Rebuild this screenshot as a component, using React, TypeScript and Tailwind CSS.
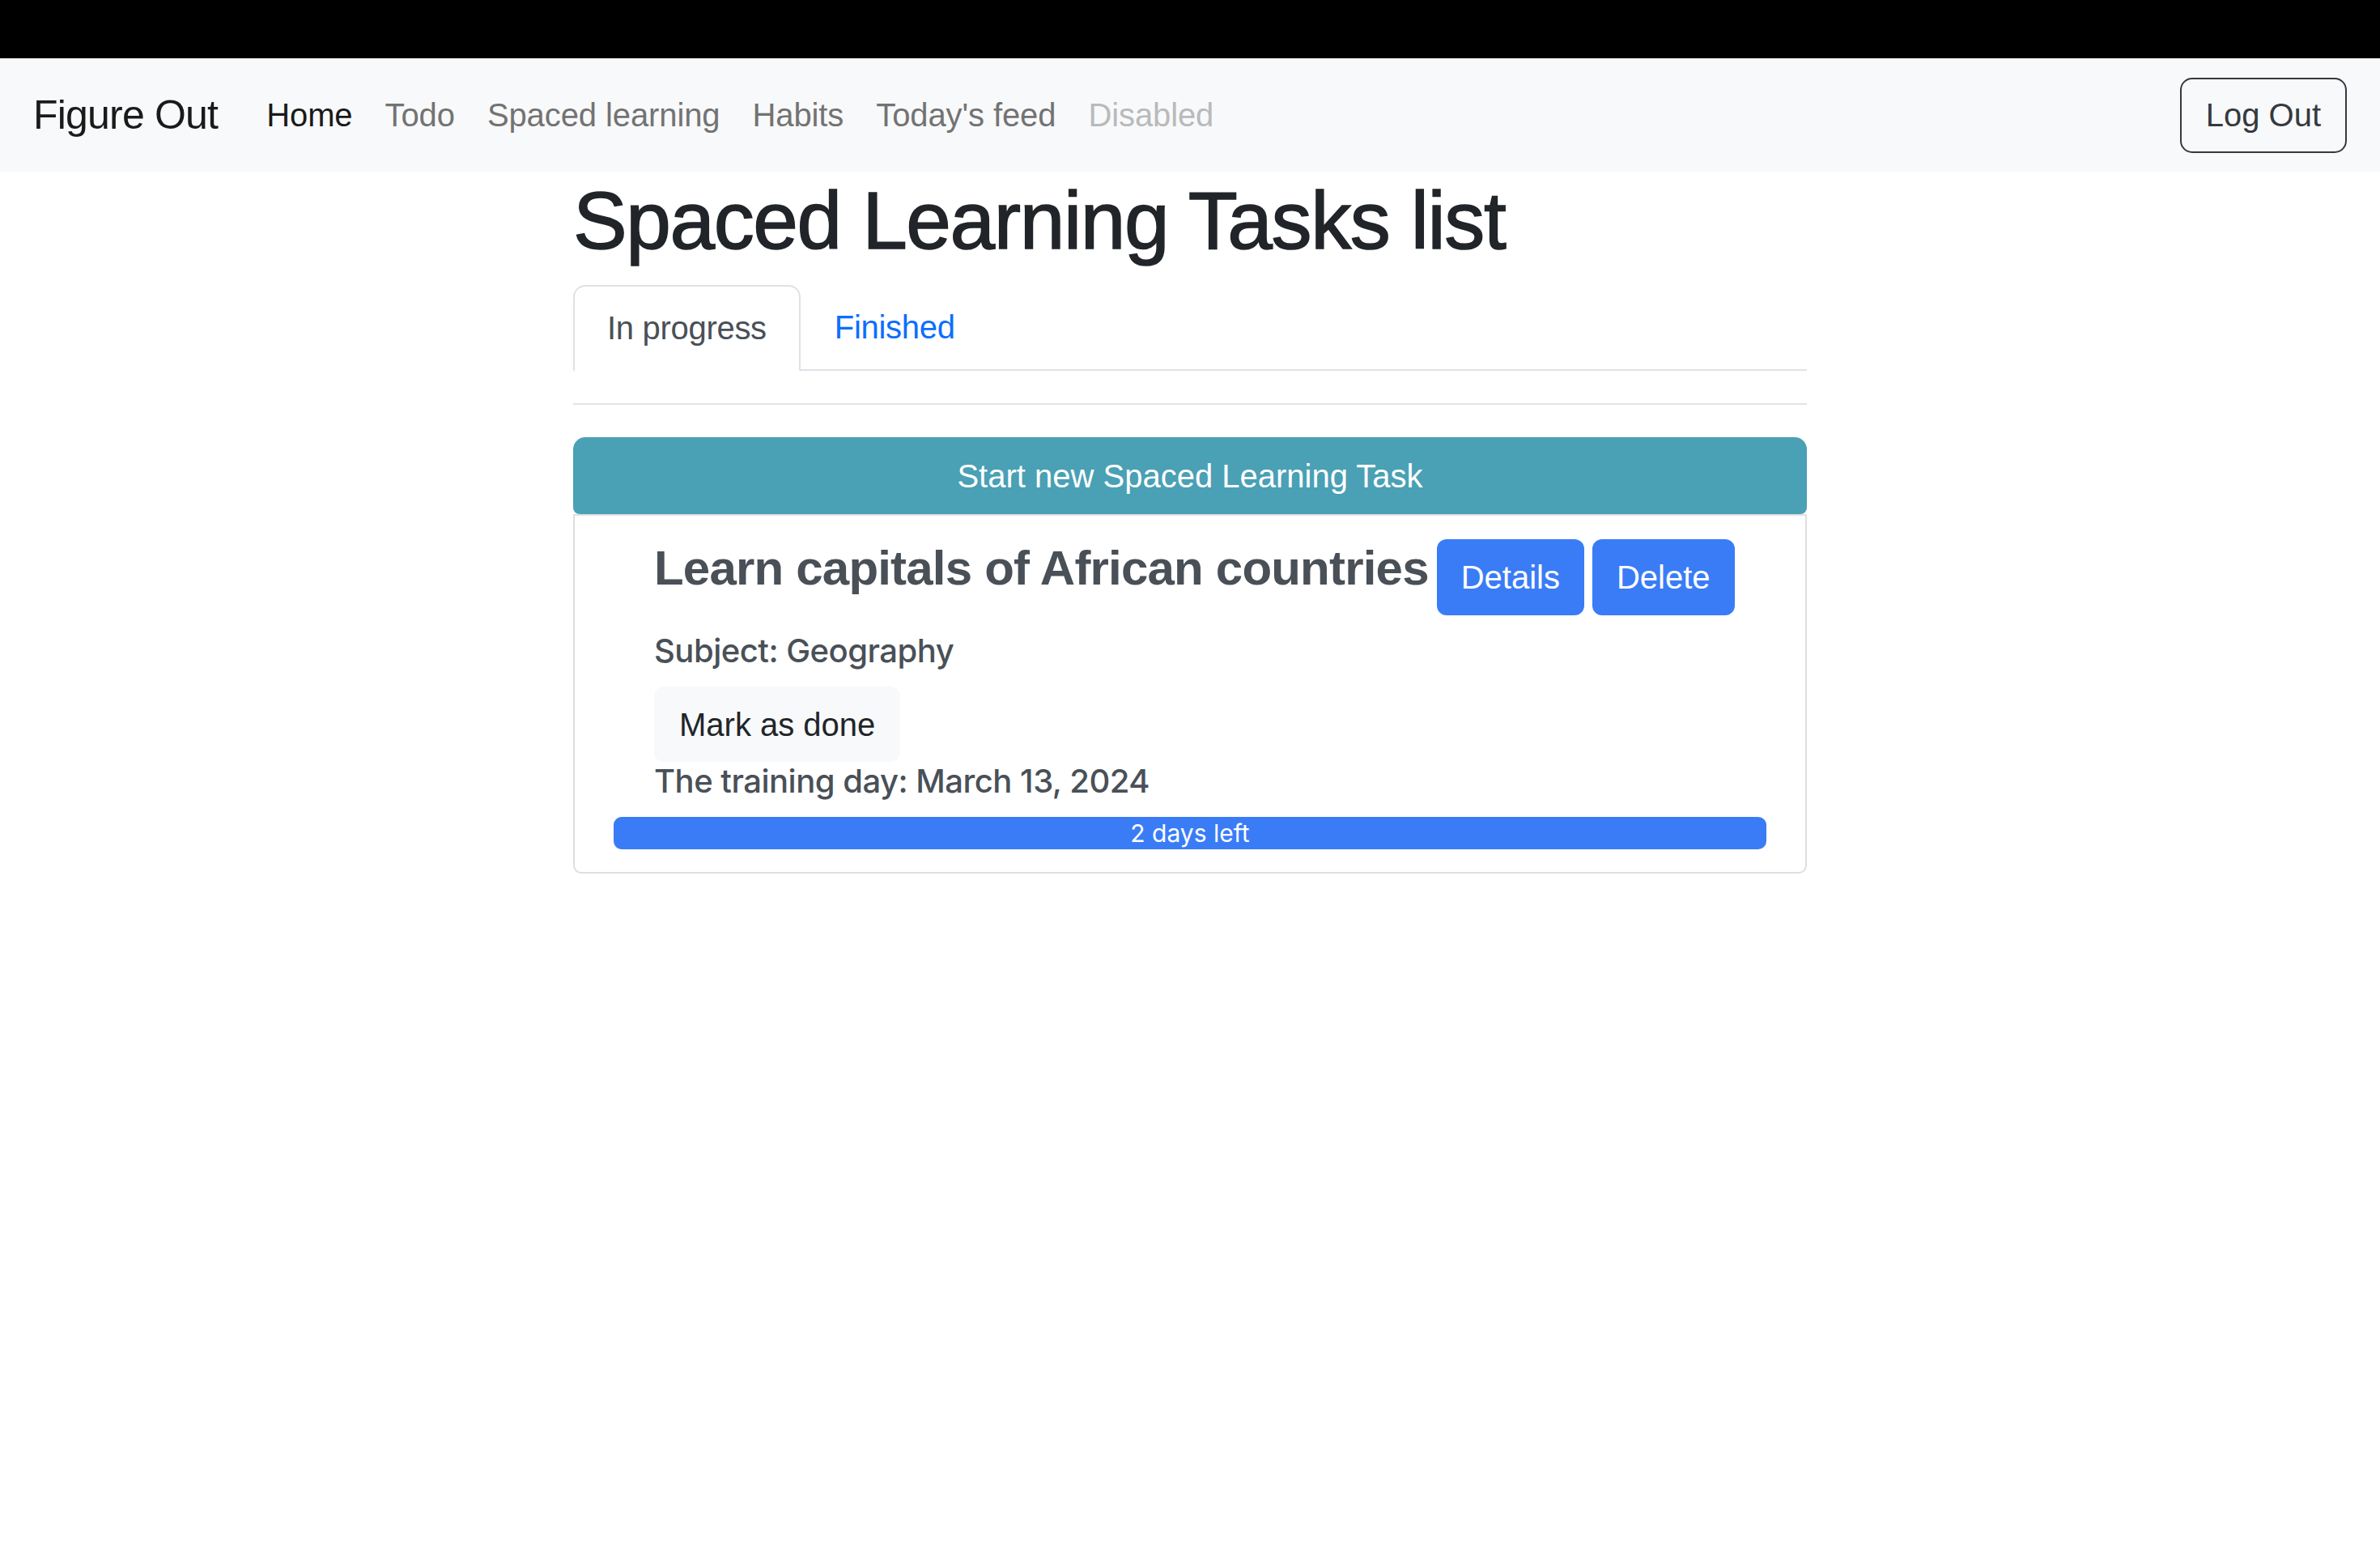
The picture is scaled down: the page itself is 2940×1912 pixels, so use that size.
import React from "react";

const navLinks = [
  { label: "Home", cls: "text-[#1a1a1a]" },
  { label: "Todo", cls: "text-[#737373]" },
  { label: "Spaced learning", cls: "text-[#737373]" },
  { label: "Habits", cls: "text-[#737373]" },
  { label: "Today's feed", cls: "text-[#737373]" },
  { label: "Disabled", cls: "text-[#b9babb]" },
];

const Navbar = () => (
  <nav className="flex h-[140px] items-center bg-[#f8f9fa] pl-[41px] pr-[41px]">
    <a className="mr-[40px] text-[50px] leading-[60px] tracking-[-0.8px] text-[#1a1a1a]">Figure Out</a>
    <ul className="flex items-center">
      {navLinks.map((l) => (
        <li key={l.label}>
          <a className={`block px-[20px] text-[40px] leading-[60px] tracking-[-0.1px] ${l.cls}`}>{l.label}</a>
        </li>
      ))}
    </ul>
    <button className="ml-auto h-[93px] rounded-[15px] border-[2.5px] border-[#343a40] px-[30px] text-[40px] text-[#343a40]">
      Log Out
    </button>
  </nav>
);

const TaskCard = () => (
  <div className="rounded-b-[10px] border-[2.5px] border-[#dfdfdf] px-[48px] pb-[28px] pt-[29px]">
    <div className="pl-[50px] pr-[34px] text-[#495057]">
      <div className="mb-[20px] flex items-start">
        <h4 className="whitespace-nowrap text-[60px] font-bold leading-[72px] tracking-[-0.8px]">Learn capitals of African countries</h4>
        <button className="ml-[10px] h-[94px] rounded-[12px] bg-[#3a7cf6] px-[30px] text-[40px] text-white">Details</button>
        <button className="ml-[10px] h-[94px] rounded-[12px] bg-[#3a7cf6] px-[30px] text-[40px] text-white">Delete</button>
      </div>
      <h6 className="mb-[20px] font-['Inter',sans-serif] text-[40px] font-medium leading-[48px] tracking-[-0.5px]">Subject: Geography</h6>
      <button className="h-[93px] rounded-[12px] bg-[#f8f9fa] px-[31px] text-[40px] text-[#212529]">Mark as done</button>
      <h6 className="mb-[20px] font-['Inter',sans-serif] text-[40px] font-medium leading-[48px] tracking-[-0.5px]">The training day: March 13, 2024</h6>
    </div>
    <div className="flex h-[40px] items-center justify-center rounded-[10px] bg-[#3a7cf6] font-['Inter',sans-serif] text-[30px] text-white">
      2 days left
    </div>
  </div>
);

export default function App() {
  return (
    <div className="min-h-screen bg-white font-['Liberation_Sans','Inter',sans-serif]">
      <div className="h-[72px] bg-black" />
      <Navbar />
      <main className="mx-auto w-[1524px]">
        <h1 className="mb-[20px] text-[100px] leading-[120px] tracking-[-1.4px] text-[#212529] [-webkit-text-stroke:1.5px_#212529]">
          Spaced Learning Tasks list
        </h1>
        <div className="flex border-b-[2.5px] border-[#dee2e6]">
          <button className="-mb-[2.5px] rounded-t-[15px] border-[2.5px] border-[#dee2e6] border-b-white bg-white px-[40px] py-[20px] text-[40px] leading-[60px] tracking-[-0.3px] text-[#495057]">
            In progress
          </button>
          <button className="border-[2.5px] border-transparent px-[40px] py-[20px] text-[40px] leading-[60px] tracking-[-0.3px] text-[#0d6efd]">
            Finished
          </button>
        </div>
        <hr className="my-[40px] border-t-[2.5px] border-[#e3e4e5]" />
        <button className="h-[95px] w-full rounded-t-[15px] rounded-b-[8px] bg-[#4aa0b5] text-[40px] text-white">
          Start new Spaced Learning Task
        </button>
        <TaskCard />
      </main>
    </div>
  );
}
